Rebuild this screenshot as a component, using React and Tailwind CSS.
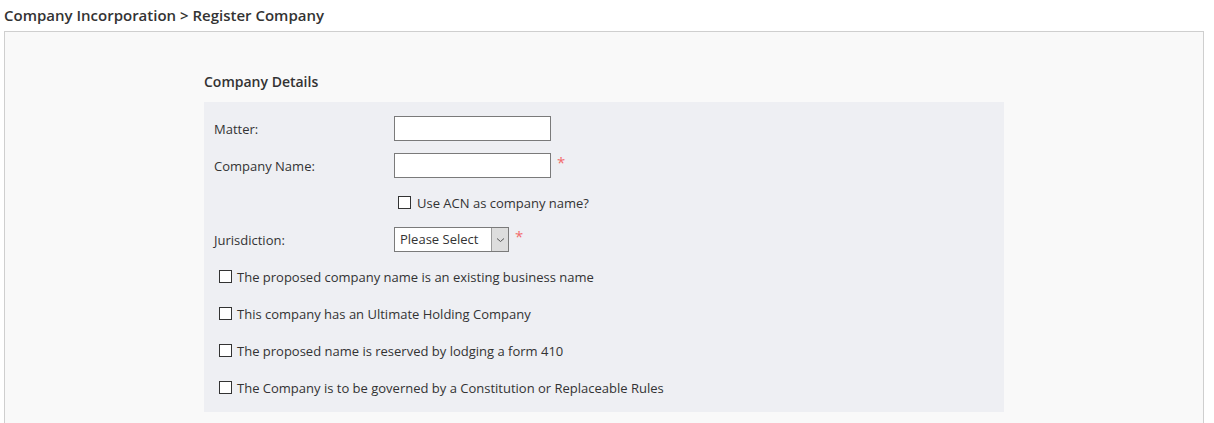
import React from "react";

function Box() {
  return <span className="inline-block w-[13px] h-[13px] border border-[#333] bg-white shrink-0" />;
}

function Star() {
  return <span className="text-[#f26b6b] text-[15px] ml-[6px] leading-none relative top-[-3px]">*</span>;
}

function Row({ label, children }) {
  return (
    <div className="flex items-center h-[37px]">
      <div className="w-[180px] shrink-0">{label}</div>
      <div className="flex items-center">{children}</div>
    </div>
  );
}

function CheckRow({ children }) {
  return (
    <div className="flex items-center h-[37px] pl-[5px]">
      <Box />
      <span className="ml-[5px]">{children}</span>
    </div>
  );
}

export default function App() {
  return (
    <div className="bg-white text-[#333] h-[423px] overflow-hidden" style={{ fontFamily: '"Open Sans", sans-serif' }}>
      <div className="h-[31px] pl-[4px] pt-[4px] text-[15px] font-semibold text-[#333] leading-[22px]">
        Company Incorporation &gt; Register Company
      </div>
      <div className="ml-[4px] mr-[10px] border border-[#cfcfcf] bg-[#f9f9f9] pt-[40px] h-[410px]">
        <div className="w-[800px] mx-auto">
          <div className="text-[14px] font-semibold leading-[20px] h-[30px] text-[#333]">Company Details</div>
          <div className="bg-[#eeeff3] pt-[8px] pb-[6px] px-[10px] text-[13px] leading-[18px]">
            <Row label="Matter:">
              <input className="w-[157px] h-[25px] border border-[#7a7a7a] bg-white outline-none" />
            </Row>
            <Row label="Company Name:">
              <input className="w-[157px] h-[25px] border border-[#7a7a7a] bg-white outline-none" />
              <Star />
            </Row>
            <div className="flex items-center h-[37px] pl-[184px]">
              <Box />
              <span className="ml-[6px]">Use ACN as company name?</span>
            </div>
            <Row label="Jurisdiction:">
              <div className="flex w-[115px] h-[25px] border border-[#7a7a7a] bg-white">
                <span className="flex-1 pl-[5px] leading-[23px]">Please Select</span>
                <span className="w-[17px] h-full bg-[#dddddd] border-l border-[#9a9a9a] flex items-center justify-center">
                  <svg width="9" height="6" viewBox="0 0 9 6">
                    <path d="M1 1.5 L4.5 4.5 L8 1.5" fill="none" stroke="#555" strokeWidth="1" />
                  </svg>
                </span>
              </div>
              <Star />
            </Row>
            <CheckRow>The proposed company name is an existing business name</CheckRow>
            <CheckRow>This company has an Ultimate Holding Company</CheckRow>
            <CheckRow>The proposed name is reserved by lodging a form 410</CheckRow>
            <CheckRow>The Company is to be governed by a Constitution or Replaceable Rules</CheckRow>
          </div>
        </div>
      </div>
    </div>
  );
}
